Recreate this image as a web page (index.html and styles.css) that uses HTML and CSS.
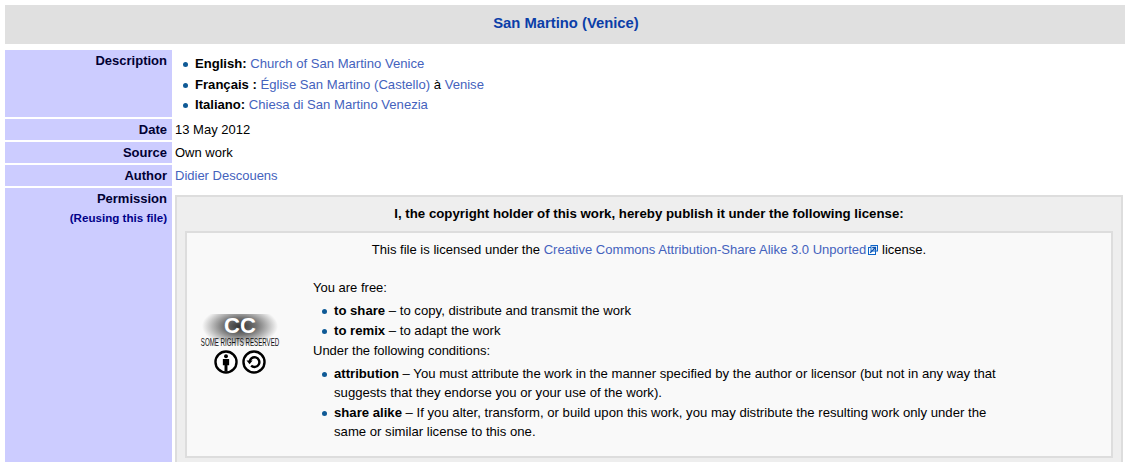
FILE: index.html
```html
<!DOCTYPE html>
<html lang="en">
<head>
<meta charset="utf-8">
<title>San Martino (Venice)</title>
<link rel="stylesheet" href="styles.css">
</head>
<body>
<div class="page">
  <h1 class="title"><a href="#">San Martino (Venice)</a></h1>
  <div class="info">
    <div class="label label-desc">Description</div>
    <div class="value">
      <ul class="langs">
        <li><b>English:</b> <a href="#">Church of San Martino Venice</a></li>
        <li><b>Français :</b> <a href="#">Église San Martino (Castello)</a> à <a href="#">Venise</a></li>
        <li><b>Italiano:</b> <a href="#">Chiesa di San Martino Venezia</a></li>
      </ul>
    </div>
    <div class="label">Date</div>
    <div class="value">13 May 2012</div>
    <div class="label">Source</div>
    <div class="value">Own work</div>
    <div class="label">Author</div>
    <div class="value"><a href="#">Didier Descouens</a></div>
    <div class="label label-perm">Permission<div class="reuse"><a href="#">(Reusing this file)</a></div></div>
    <div class="value value-perm">
      <div class="perm-box">
        <p class="perm-head">I, the copyright holder of this work, hereby publish it under the following license:</p>
        <div class="license">
          <p class="license-lead">This file is licensed under the <a href="#">Creative Commons Attribution-Share Alike 3.0 Unported<svg class="ext" width="10" height="10" viewBox="0 0 10 10" aria-hidden="true"><rect x="0.5" y="2.5" width="7" height="7" fill="#fff" stroke="#0a62c8"/><rect x="3" y="0.5" width="6.5" height="5.5" fill="#fff" stroke="#0a62c8"/><path d="M2.2 7.8 6.6 3.4M4.2 2.5H7.5V5.8" fill="none" stroke="#0a52b0" stroke-width="1.3"/></svg></a> license.</p>
          <div class="license-body">
            <div class="badge">
              <div class="cc-glow"><span class="cc">CC</span><span class="some">SOME RIGHTS RESERVED</span></div>
              <div class="badge-icons">
                <svg width="24" height="24" viewBox="0 0 26 26" aria-hidden="true"><circle cx="13" cy="13" r="11.4" fill="#fff" stroke="#000" stroke-width="2.6"/><circle cx="13" cy="6.8" r="2.1"/><path d="M9.6 9.8h6.8v6.8h-1.8v6.6h-3.2v-6.6H9.6z"/></svg>
                <svg width="24" height="24" viewBox="0 0 26 26" aria-hidden="true"><circle cx="13" cy="13" r="11.4" fill="#fff" stroke="#000" stroke-width="2.6"/><path d="M8.2 13a5.3 5.3 0 1 1 1.7 4" fill="none" stroke="#000" stroke-width="2.6"/><path d="M4.9 11.4h6.6l-3.3 4z"/></svg>
              </div>
            </div>
            <div class="terms">
              <p class="terms-line">You are free:</p>
              <ul class="term-list">
                <li><b>to share</b> – to copy, distribute and transmit the work</li>
                <li><b>to remix</b> – to adapt the work</li>
              </ul>
              <p class="terms-line">Under the following conditions:</p>
              <ul class="term-list">
                <li><b>attribution</b> – You must attribute the work in the manner specified by the author or licensor (but not in any way that suggests that they endorse you or your use of the work).</li>
                <li><b>share alike</b> – If you alter, transform, or build upon this work, you may distribute the resulting work only under the same or similar license to this one.</li>
              </ul>
            </div>
          </div>
        </div>
      </div>
    </div>
  </div>
</div>
</body>
</html>
```
FILE: styles.css
```css
html, body { margin: 0; padding: 0; height: 462px; overflow: hidden; background: #fff; }
body { font-family: "Liberation Sans", Arial, sans-serif; font-size: 13px; line-height: 19px; color: #000; }
a { color: #4462bd; text-decoration: none; }
b { font-weight: bold; }
p { margin: 0; }
.page { padding: 5px 14px 0 5px; }
.title { margin: 0; padding-left: 2px; height: 39px; line-height: 37px; background: #e0e0e0; text-align: center; font-size: 14.8px; font-weight: bold; }
.title a { color: #0b3ea8; }
.info { display: grid; grid-template-columns: 167px 1fr; column-gap: 3px; row-gap: 2px; margin-top: 6px; }
.label { background: #ccccff; text-align: right; font-weight: bold; padding: 1px 5px 1px 0; height: 19px; color: #000033; }
.label-desc { height: auto; }
.label-perm { height: 272px; }
.reuse { font-size: 11.6px; line-height: 20px; }
.reuse a { color: #000088; }
.value { padding-top: 1px; }
.langs { margin: 3px 0 2px; padding: 0 0 0 20px; list-style: none; font-size: 13.1px; }
.langs li { position: relative; line-height: 20px; }
.langs li:first-child { margin-bottom: 1px; }
.term-list li { position: relative; line-height: 19px; margin-bottom: 1px; font-size: 13.15px; }
.langs li::before, .term-list li::before { content: ""; position: absolute; left: -12px; top: 8px; width: 5px; height: 5px; border-radius: 50%; background: #0f5a96; }
.value-perm { padding-top: 7px; margin-right: 2px; }
.perm-box { border: 2px solid #dddddd; background: #eeeeee; padding: 0 8px 20px; }
.perm-head { font-weight: bold; font-size: 13.25px; text-align: center; line-height: 34px; height: 34px; }
.license { border: 2px solid #dddddd; background: #f9f9f9; padding: 7px 0 14px; }
.license-lead { text-align: center; line-height: 19px; font-size: 13.05px; }
.ext { margin-left: 2px; vertical-align: -1px; }
.license-body { display: flex; margin-top: 19px; }
.badge { width: 106px; flex: none; display: flex; flex-direction: column; align-items: center; margin-top: 36px; }
.cc-glow { width: 76px; height: 35px; display: flex; flex-direction: column; align-items: center; background: radial-gradient(ellipse 38px 20px at 50% 35%, #333 0%, #777 45%, #f9f9f9 100%); }
.cc { font-size: 22px; font-weight: bold; color: #fff; line-height: 23px; height: 23px; }
.some { font-size: 10.5px; line-height: 10px; white-space: nowrap; transform: scaleX(0.585); color: #111; }
.badge-icons { display: flex; gap: 4px; margin-top: 1px; }
.terms { width: 685px; margin-left: 20px; }
.terms-line { line-height: 19px; }
.term-list { margin: 4px 0 0; padding: 0 0 0 21px; list-style: none; }
```
